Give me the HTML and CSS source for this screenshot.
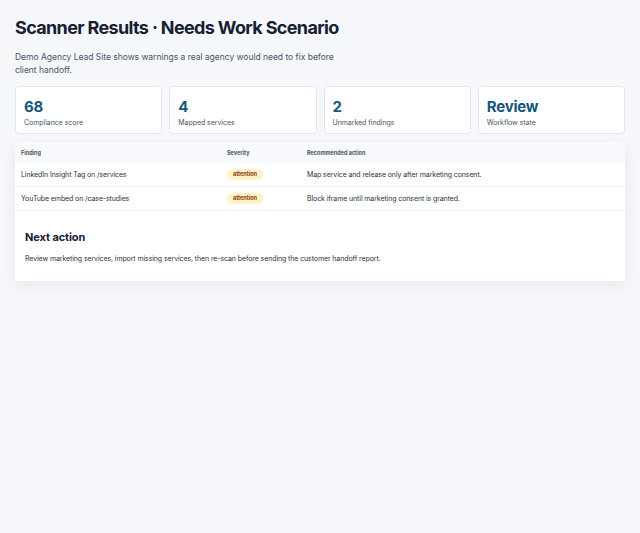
FILE: index.html
```html
<!DOCTYPE html>
<html lang="en">
<head>
<meta charset="utf-8">
<title>Scanner Results</title>
<link rel="stylesheet" href="styles.css">
</head>
<body>
<main class="page">
  <h1 class="title">Scanner Results · Needs Work Scenario</h1>
  <p class="lead">Demo Agency Lead Site shows warnings a real agency would need to fix before client handoff.</p>
  <section class="stats">
    <div class="stat"><div class="stat-value">68</div><div class="stat-label">Compliance score</div></div>
    <div class="stat"><div class="stat-value">4</div><div class="stat-label">Mapped services</div></div>
    <div class="stat"><div class="stat-value">2</div><div class="stat-label">Unmarked findings</div></div>
    <div class="stat"><div class="stat-value">Review</div><div class="stat-label">Workflow state</div></div>
  </section>
  <section class="panel">
    <table class="findings">
      <thead>
        <tr><th class="c1">Finding</th><th class="c2">Severity</th><th class="c3">Recommended action</th></tr>
      </thead>
      <tbody>
        <tr><td>LinkedIn Insight Tag on /services</td><td><span class="badge">attention</span></td><td>Map service and release only after marketing consent.</td></tr>
        <tr><td>YouTube embed on /case-studies</td><td><span class="badge">attention</span></td><td>Block iframe until marketing consent is granted.</td></tr>
      </tbody>
    </table>
    <div class="next">
      <h2 class="next-title">Next action</h2>
      <p class="next-text">Review marketing services, import missing services, then re-scan before sending the customer handoff report.</p>
    </div>
  </section>
</main>
</body>
</html>
```

FILE: styles.css
```css
* { box-sizing: border-box; }
html, body { margin: 0; padding: 0; }
body {
  background: #f5f7fb;
  font-family: Inter, "Noto Sans", "Liberation Sans", sans-serif;
  color: #111827;
}
.page { padding: 17px 15px 20px 15px; }
.title {
  margin: 0;
  font-size: 18px;
  font-weight: 700;
  color: #172033;
  letter-spacing: -0.65px;
  line-height: 22px;
}
.lead {
  margin: 12px 0 0 0;
  max-width: 330px;
  font-size: 8.5px;
  line-height: 13px;
  color: #475569;
  letter-spacing: -0.02px;
}
.stats {
  margin-top: 9px;
  display: grid;
  grid-template-columns: repeat(4, 1fr);
  gap: 7px;
}
.stat {
  background: #fff;
  border: 1px solid #e3e8ef;
  border-radius: 4px;
  padding: 11px 8px 6px 8px;
  height: 48px;
}
.stat-value {
  font-size: 15px;
  font-weight: 700;
  color: #17577c;
  line-height: 18px;
  letter-spacing: -0.2px;
}
.stat-label {
  margin-top: 2px;
  font-size: 7px;
  line-height: 9px;
  color: #475569;
  letter-spacing: -0.05px;
}
.panel {
  margin-top: 8px;
  background: #f7f9fc;
  box-shadow: 0 4px 14px rgba(15, 23, 42, 0.06);
}
.findings {
  width: 100%;
  border-collapse: collapse;
}
.findings th {
  text-align: left;
  font-size: 5.5px;
  font-weight: 700;
  color: #4b5563;
  padding: 1px 6px 0 6px;
  height: 21px;
}
.findings .c1 { width: 206px; }
.findings .c2 { width: 80px; }
.findings td {
  background: #fff;
  font-size: 7px;
  color: #283241;
  padding: 0 6px;
  height: 23.5px;
  border-bottom: 1px solid #eef1f5;
  letter-spacing: -0.1px;
}
.badge {
  display: inline-block;
  background: #fef3c7;
  color: #8a3a0c;
  font-size: 5.5px;
  font-weight: 700;
  padding: 0 6px;
  line-height: 11px;
  border-radius: 6px;
  letter-spacing: 0;
}
.next {
  background: #fff;
  padding: 20px 10px 17px 10px;
  height: 70px;
}
.next-title {
  margin: 0;
  font-size: 11px;
  font-weight: 700;
  line-height: 13px;
  color: #172033;
  letter-spacing: -0.1px;
}
.next-text {
  margin: 10px 0 0 0;
  font-size: 7px;
  line-height: 9px;
  color: #283241;
  letter-spacing: -0.1px;
}
```
